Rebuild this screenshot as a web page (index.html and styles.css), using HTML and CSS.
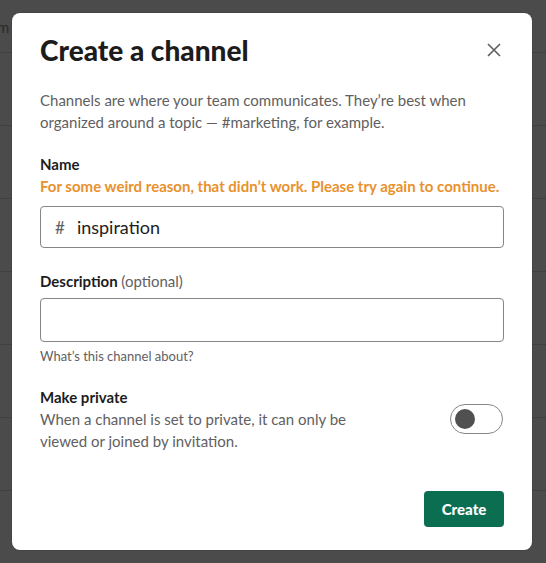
FILE: index.html
```html
<!DOCTYPE html>
<html>
<head>
<meta charset="utf-8">
<link rel="stylesheet" href="styles.css">
</head>
<body>
<div class="backdrop">
  <div class="bg-row bg-first"><span class="bg-text">m</span></div>
  <div class="bg-row"></div>
  <div class="bg-row"></div>
  <div class="bg-row"></div>
  <div class="bg-row"></div>
  <div class="bg-row"></div>
  <div class="bg-row"></div>
  <div class="bg-row"></div>
</div>
<div class="modal">
  <div class="header">
    <h1 class="title">Create a channel</h1>
    <button class="close" aria-label="Close">
      <svg width="14" height="14" viewBox="0 0 14 14"><path d="M1 1 L13 13 M13 1 L1 13" stroke="#5e5e5e" stroke-width="1.6" fill="none"/></svg>
    </button>
  </div>
  <div class="body">
    <p class="intro">Channels are where your team communicates. They’re best when organized around a topic — #marketing, for example.</p>
    <div class="field">
      <div class="label">Name</div>
      <div class="error">For some weird reason, that didn’t work. Please try again to continue.</div>
      <div class="input input-name"><span class="hash">#</span><span class="value">inspiration</span></div>
    </div>
    <div class="field field-desc">
      <div class="label">Description <span class="optional">(optional)</span></div>
      <div class="input input-desc"></div>
      <div class="hint">What’s this channel about?</div>
    </div>
    <div class="private">
      <div class="private-text">
        <div class="label">Make private</div>
        <div class="private-desc">When a channel is set to private, it can only be viewed or joined by invitation.</div>
      </div>
      <div class="toggle"><span class="knob"></span></div>
    </div>
  </div>
  <div class="footer">
    <button class="create">Create</button>
  </div>
</div>
</body>
</html>
```
FILE: styles.css
```css
html, body {
  margin: 0;
  padding: 0;
}
body {
  width: 546px;
  height: 563px;
  overflow: hidden;
  background: #4b4b4b;
  font-family: Lato, "Liberation Sans", sans-serif;
  position: relative;
}
.backdrop {
  display: flex;
  flex-direction: column;
}
.bg-row {
  height: 72px;
  border-bottom: 1px solid #404040;
}
.bg-first {
  height: 52px;
  position: relative;
}
.bg-text {
  position: absolute;
  left: -3px;
  top: 18px;
  color: #2a2a2a;
  font-size: 15px;
}
.modal {
  position: absolute;
  left: 12px;
  top: 13px;
  width: 520px;
  height: 537px;
  background: #fff;
  border-radius: 8px;
  box-sizing: border-box;
  display: flex;
  flex-direction: column;
  box-shadow: 0 0 0 1px rgba(0,0,0,0.08);
}
.header {
  display: flex;
  align-items: center;
  justify-content: space-between;
  padding: 19px 28px 0 28px;
}
.title {
  margin: 0;
  font-size: 28px;
  line-height: 36px;
  font-weight: 900;
  color: #1d1c1d;
}
.close {
  border: 0;
  background: none;
  padding: 0;
  width: 14px;
  height: 14px;
  margin-right: 3px;
  display: flex;
}
.body {
  padding: 0 28px;
  flex: 1;
}
.intro {
  margin: 21px 0 0;
  font-size: 15px;
  line-height: 22px;
  color: #616061;
}
.field {
  margin-top: 20px;
}
.label {
  font-size: 15px;
  line-height: 22px;
  font-weight: 700;
  color: #1d1c1d;
}
.optional {
  font-weight: 400;
  color: #616061;
}
.error {
  font-size: 15px;
  line-height: 22px;
  font-weight: 700;
  color: #e8912d;
}
.input {
  height: 42px;
  box-sizing: border-box;
  border: 1px solid #868686;
  border-radius: 4px;
  display: flex;
  align-items: center;
  padding: 0 14px;
  font-size: 18px;
  color: #1d1c1d;
}
.input-name {
  margin-top: 9px;
}
.input-desc {
  height: 44px;
  margin-top: 6px;
}
.hash {
  color: #616061;
  font-size: 17px;
  margin-right: 12px;
}
.field-desc {
  margin-top: 22px;
}
.hint {
  margin-top: 5px;
  font-size: 13px;
  line-height: 18px;
  color: #616061;
}
.private {
  margin-top: 21px;
  display: flex;
  align-items: flex-start;
  justify-content: space-between;
}
.private-text {
  width: 330px;
}
.private-desc {
  font-size: 15px;
  line-height: 22px;
  color: #616061;
}
.toggle {
  width: 53px;
  height: 30px;
  box-sizing: border-box;
  border: 1px solid #868686;
  border-radius: 16px;
  display: flex;
  align-items: center;
  padding-left: 4px;
  margin-top: 18px;
  margin-right: 1px;
}
.knob {
  width: 20px;
  height: 20px;
  border-radius: 50%;
  background: #505050;
}
.footer {
  display: flex;
  justify-content: flex-end;
  padding: 0 28px 23px;
}
.create {
  border: 0;
  border-radius: 4px;
  background: #0c6e50;
  color: #fff;
  font-family: Lato, "Liberation Sans", sans-serif;
  font-size: 15px;
  font-weight: 900;
  height: 36px;
  padding: 0 16px;
  min-width: 80px;
}
```
